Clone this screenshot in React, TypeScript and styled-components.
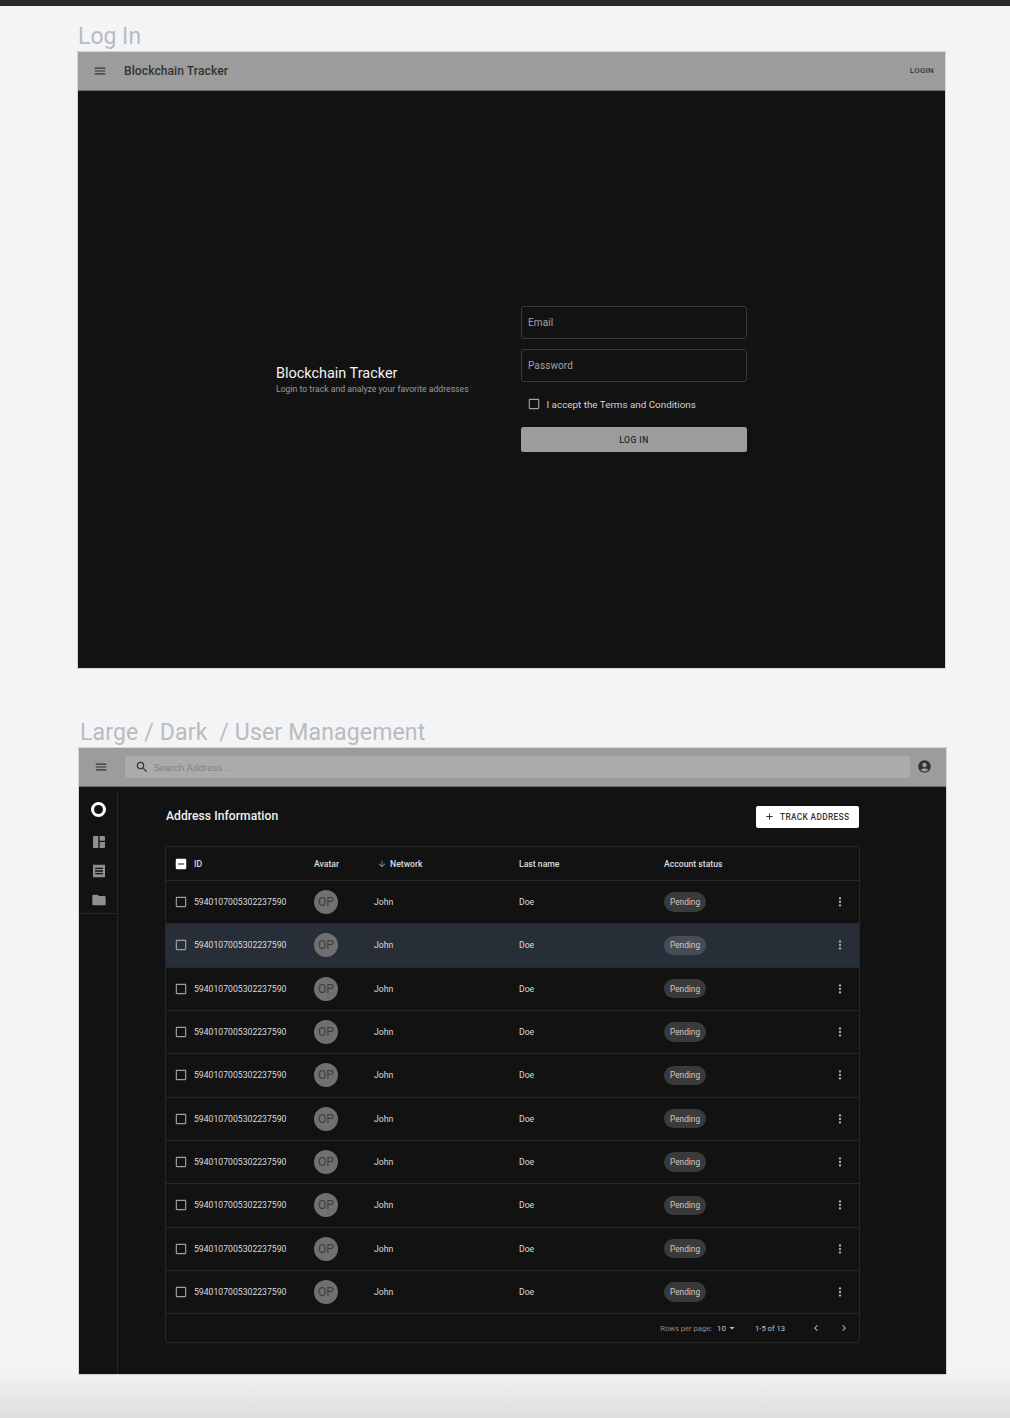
import styled, { createGlobalStyle } from 'styled-components';
import {
  MdAccountCircle,
  MdAdd,
  MdArrowDownward,
  MdArrowDropDown,
  MdCheckBoxOutlineBlank,
  MdChevronLeft,
  MdChevronRight,
  MdFolder,
  MdIndeterminateCheckBox,
  MdMenu,
  MdMoreVert,
  MdReceipt,
  MdSearch,
  MdSpaceDashboard,
} from 'react-icons/md';

const GlobalStyle = createGlobalStyle`
  html,
  body {
    margin: 0;
    padding: 0;
  }

  body {
    font-family: Roboto, 'Liberation Sans', sans-serif;
  }
`;

const Page = styled.div`
  width: 1010px;
  height: 1418px;
  overflow: hidden;
  background: linear-gradient(#f3f4f6 calc(100% - 50px), #dddee0 100%);
`;

const TopStrip = styled.div`
  height: 6px;
  background: #2a2a2a;
`;

const Section = styled.section<{ $indent: number; $top: number }>`
  margin-left: ${(props) => props.$indent}px;
  margin-top: ${(props) => props.$top}px;
  width: 867px;
`;

const SectionLabel = styled.h2<{ $inset?: number; $tracking?: number }>`
  margin: 0;
  padding-left: ${(props) => props.$inset ?? 0}px;
  font-size: 23px;
  font-weight: 400;
  line-height: 31px;
  letter-spacing: ${(props) => props.$tracking ?? 0}px;
  color: #b9bbbf;
  white-space: pre;
`;

const Frame = styled.div<{ $height: number }>`
  height: ${(props) => props.$height}px;
  display: flex;
  flex-direction: column;
  background: #121212;
  outline: 1px solid rgba(120, 120, 120, 0.25);
`;

const AppBar = styled.header<{ $end: number }>`
  flex: none;
  box-sizing: border-box;
  height: 38.5px;
  display: flex;
  align-items: center;
  gap: 9px;
  padding: 0 ${(props) => props.$end}px 0 15px;
  color: #333;
  background: #9c9c9c;
  border-bottom: 1px solid #6e6e6e;
`;

const BarTitle = styled.div`
  flex: 1;
  margin-left: 8px;
  font-size: 12.1px;
  font-weight: 500;
  letter-spacing: 0.06px;
  color: #333;
`;

const BarAction = styled.span`
  font-size: 7.9px;
  font-weight: 500;
  letter-spacing: 0.3px;
  color: #333;
`;

const LoginBody = styled.div`
  flex: 1;
  display: flex;
  align-items: center;
  justify-content: center;
  gap: 53px;
`;

const Intro = styled.div`
  width: 192px;
`;

const IntroTitle = styled.div`
  margin-bottom: 2px;
  font-size: 14.45px;
  line-height: 17px;
  color: #f2f2f2;
`;

const IntroText = styled.div`
  font-size: 8.67px;
  line-height: 10px;
  color: #9a9a9a;
  white-space: nowrap;
`;

const LoginForm = styled.form`
  width: 226px;
  display: flex;
  flex-direction: column;
  margin: 0;
`;

const Field = styled.div`
  box-sizing: border-box;
  height: 33px;
  margin-bottom: 10px;
  padding-left: 6px;
  display: flex;
  align-items: center;
  font-size: 10px;
  letter-spacing: 0.1px;
  color: #a2a2a2;
  border: 1px solid #3b3b3b;
  border-radius: 3px;
`;

const TermsRow = styled.label`
  display: flex;
  align-items: center;
  gap: 6px;
  height: 22px;
  margin: 1px 0 12px 5.5px;
  font-size: 9.85px;
  color: #d2d2d2;
  white-space: nowrap;
`;

const LoginButton = styled.button`
  height: 25px;
  padding: 0;
  border: none;
  border-radius: 2.5px;
  font-family: inherit;
  font-size: 8.67px;
  font-weight: 500;
  letter-spacing: 0.4px;
  color: #2a2a2a;
  background: #9c9c9c;
`;

const SearchBox = styled.div`
  flex: 1;
  height: 22px;
  margin: 1px -2px 0 8px;
  padding-left: 10px;
  display: flex;
  align-items: center;
  gap: 5px;
  font-size: 9.8px;
  color: #828282;
  background: #ababab;
  border-radius: 3px;
`;

const Workspace = styled.div`
  flex: 1;
  display: flex;
  min-height: 0;
`;

const SideNav = styled.nav`
  flex: none;
  box-sizing: border-box;
  width: 39px;
  margin-top: 4px;
  border-right: 1px solid #272727;
`;

const SideIcons = styled.div`
  height: 123px;
  box-sizing: border-box;
  padding: 11px 0 0 1px;
  display: flex;
  flex-direction: column;
  align-items: center;
  gap: 13px;
  color: #8f8f8f;
  border-bottom: 1px solid #272727;
`;

const LogoRing = styled.div`
  box-sizing: border-box;
  width: 15px;
  height: 15px;
  margin-bottom: 4px;
  border: 3px solid #fff;
  border-radius: 50%;
`;

const Content = styled.main`
  flex: 1;
  padding: 19px 86px 0 47px;
`;

const TitleRow = styled.div`
  height: 22px;
  margin-bottom: 18px;
  padding: 0 1px;
  display: flex;
  align-items: center;
  justify-content: space-between;
`;

const PageTitle = styled.h1`
  margin: 0 0 2px;
  font-size: 12.1px;
  font-weight: 500;
  letter-spacing: 0.06px;
  color: #f2f2f2;
`;

const TrackButton = styled.button`
  box-sizing: border-box;
  width: 103px;
  height: 22px;
  padding: 0 0 0 8px;
  display: flex;
  align-items: center;
  gap: 5px;
  border: none;
  border-radius: 2px;
  font-family: inherit;
  font-size: 8.3px;
  font-weight: 500;
  letter-spacing: 0.35px;
  color: #333;
  background: #fff;
`;

const TableCard = styled.div`
  box-sizing: border-box;
  width: 695px;
  border: 1px solid #272727;
  border-radius: 3px;
  overflow: hidden;
`;

const Row = styled.div<{ $head?: boolean; $selected?: boolean }>`
  box-sizing: border-box;
  height: ${(props) => (props.$head ? '34.4px' : '43.33px')};
  padding-top: ${(props) => (props.$head ? '1px' : '0')};
  display: grid;
  grid-template-columns: 148px 60px 145px 145px 1fr 40px;
  align-items: center;
  font-size: 8.67px;
  font-weight: ${(props) => (props.$head ? 500 : 400)};
  color: #dcdcdc;
  background: ${(props) => (props.$selected ? '#272e38' : 'transparent')};
  border-bottom: 1px solid #272727;
`;

const IdCell = styled.div`
  display: flex;
  align-items: center;
  gap: 6px;
  padding-left: 8px;
  color: #dcdcdc;
`;

const NetworkHead = styled.div`
  display: flex;
  align-items: center;
  gap: 3px;
  padding-left: 3px;
`;

const Avatar = styled.div`
  width: 24px;
  height: 24px;
  display: flex;
  align-items: center;
  justify-content: center;
  font-size: 12.1px;
  color: #3c3c3c;
  background: #707070;
  border-radius: 50%;
`;

const StatusChip = styled.span<{ $selected?: boolean }>`
  display: inline-flex;
  align-items: center;
  height: 19.5px;
  padding: 0 6px;
  font-size: 8.3px;
  color: #c8c8c8;
  background: ${(props) => (props.$selected ? '#484d55' : '#3a3a3a')};
  border-radius: 10px;
`;

const RowMenu = styled.div`
  display: flex;
  justify-content: center;
  padding-left: 1px;
  color: #a8a8a8;
`;

const TableFooter = styled.div`
  height: 28px;
  padding-right: 9px;
  display: flex;
  align-items: center;
  justify-content: flex-end;
  font-size: 7.6px;
  color: #8c8c8c;
`;

const PerPage = styled.span`
  display: inline-flex;
  align-items: center;
  margin-left: 5px;
  font-size: 8px;
  color: #c4c4c4;
`;

const PageRange = styled.span`
  margin: 0 25px 0 17px;
  color: #c4c4c4;
`;

const PagerButtons = styled.div`
  display: flex;
  gap: 16px;
  color: #b0b0b0;
`;

const ROW_COUNT = 10;

const AddressRow = ({ selected }: { selected: boolean }) => (
  <Row $selected={selected}>
    <IdCell>
      <MdCheckBoxOutlineBlank size={14} color="#a0a0a0" />
      5940107005302237590
    </IdCell>
    <Avatar>OP</Avatar>
    <div>John</div>
    <div>Doe</div>
    <div>
      <StatusChip $selected={selected}>Pending</StatusChip>
    </div>
    <RowMenu>
      <MdMoreVert size={14} />
    </RowMenu>
  </Row>
);

const LoginScreen = () => (
  <Section $indent={78} $top={15}>
    <SectionLabel>Log In</SectionLabel>
    <Frame $height={616}>
      <AppBar $end={11}>
        <MdMenu size={14} />
        <BarTitle>Blockchain Tracker</BarTitle>
        <BarAction>LOGIN</BarAction>
      </AppBar>
      <LoginBody>
        <Intro>
          <IntroTitle>Blockchain Tracker</IntroTitle>
          <IntroText>Login to track and analyze your favorite addresses</IntroText>
        </Intro>
        <LoginForm>
          <Field>Email</Field>
          <Field>Password</Field>
          <TermsRow>
            <MdCheckBoxOutlineBlank size={14} color="#a0a0a0" />I accept the
            Terms and Conditions
          </TermsRow>
          <LoginButton type="button">LOG IN</LoginButton>
        </LoginForm>
      </LoginBody>
    </Frame>
  </Section>
);

const ManagementScreen = () => (
  <Section $indent={79} $top={49}>
    <SectionLabel $inset={1} $tracking={0.17}>
      Large / Dark  / User Management
    </SectionLabel>
    <Frame $height={626}>
      <AppBar $end={14}>
        <MdMenu size={14} />
        <SearchBox>
          <MdSearch size={14} color="#333" />
          Search Address...
        </SearchBox>
        <MdAccountCircle size={15} />
      </AppBar>
      <Workspace>
        <SideNav>
          <SideIcons>
            <LogoRing />
            <MdSpaceDashboard size={16} />
            <MdReceipt size={16} />
            <MdFolder size={16} />
          </SideIcons>
        </SideNav>
        <Content>
          <TitleRow>
            <PageTitle>Address Information</PageTitle>
            <TrackButton type="button">
              <MdAdd size={11} />
              TRACK ADDRESS
            </TrackButton>
          </TitleRow>
          <TableCard>
            <Row $head>
              <IdCell>
                <MdIndeterminateCheckBox size={14} color="#fff" />
                ID
              </IdCell>
              <div>Avatar</div>
              <NetworkHead>
                <MdArrowDownward size={10} color="#9a9a9a" />
                Network
              </NetworkHead>
              <div>Last name</div>
              <div>Account status</div>
              <div />
            </Row>
            {Array.from({ length: ROW_COUNT }, (_, index) => (
              <AddressRow key={index} selected={index === 1} />
            ))}
            <TableFooter>
              Rows per page:
              <PerPage>
                10
                <MdArrowDropDown size={12} />
              </PerPage>
              <PageRange>1-5 of 13</PageRange>
              <PagerButtons>
                <MdChevronLeft size={12} />
                <MdChevronRight size={12} />
              </PagerButtons>
            </TableFooter>
          </TableCard>
        </Content>
      </Workspace>
    </Frame>
  </Section>
);

export default function App() {
  return (
    <Page>
      <GlobalStyle />
      <TopStrip />
      <LoginScreen />
      <ManagementScreen />
    </Page>
  );
}
